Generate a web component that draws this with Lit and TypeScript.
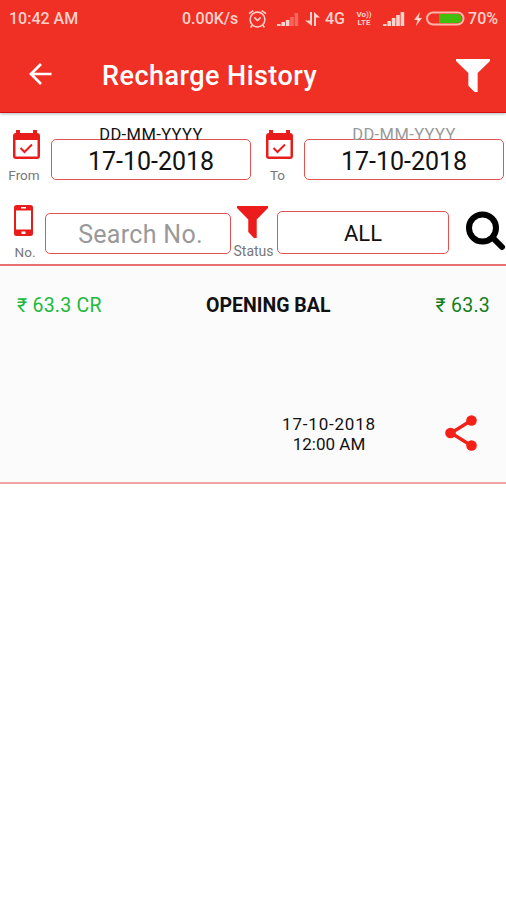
import { LitElement, html, css, svg } from "lit";
import { customElement } from "lit/decorators.js";

const calendar = html`<svg width="27" height="30" viewBox="0 0 27 30">
  <path fill="#e91c1c" fill-rule="evenodd" d="M3 1.500V0h4v3h13V0h4v3q3 0 3 3v20q0 3-3 3H3q-3 0-3-3V6q0-3 3-3zM2.500 10v16.500h22V10z"/>
  <path fill="none" stroke="#e91c1c" stroke-width="2" d="M7.500 18l4 4 7.500-7.500"/></svg>`;

const funnelPath = svg`<path d="M0 0h33v2L21 13.500v18.500h-3l-6-6V13.500L0 2z"/>`;

@customElement("app-root")
export class AppRoot extends LitElement {
  static styles = css`
    :host { display: block; width: 506px; height: 900px; overflow: hidden; background: #fff; font-family: Roboto, sans-serif; color: #111; }
    svg { display: block; flex: none; }
    header { height: 113px; background: #f02f25; border-bottom: 1px solid #dc0f0d; box-sizing: border-box; box-shadow: 0 1px 3px #a9bbbf; position: relative; color: #fff; }
    .status { height: 37px; display: flex; align-items: center; padding: 0 8px 0 9px; box-sizing: border-box; font-size: 16px; font-weight: 500; color: #ffd2cb; white-space: nowrap; }
    .status .time { width: 173px; }
    .status .rate { width: 66px; }
    .status .net { width: 30px; }
    .status .pct { margin-left: auto; }
    .volte { width: 18px; font-size: 8px; line-height: 7.500px; font-weight: 700; text-align: center; margin-right: 9px; }
    .bar { height: 76px; display: flex; align-items: center; padding: 0 16px 0 29px; }
    .back { margin-bottom: 2px; }
    h1 { margin: 2px 0 0 50px; flex: 1; font-size: 27px; font-weight: 500; line-height: 32px; letter-spacing: 0.460px; }
    .filters { height: 151px; box-sizing: border-box; padding-top: 8px; }
    .row { display: grid; }
    .dates { grid-template-columns: 51px 200px 53px 200px; height: 79px; }
    .search { grid-template-columns: 45px 186px 46px 172px 57px; height: 64px; }
    .cell { display: flex; flex-direction: column; align-items: center; color: #777; font-size: 13.500px; line-height: 16px; white-space: nowrap; }
    .from, .to { padding-top: 9px; gap: 7px; }
    .from { padding-left: 2px; }
    .from span { margin-right: 5px; }
    .to { padding-right: 0; padding-left: 0; }
    .to svg { margin-left: 4px; }
    .from { box-sizing: border-box; }
    .no { padding: 5px 0 0 2px; gap: 8px; }
    .no span { margin-left: 3px; }
    .state { padding-top: 6px; gap: 5px; font-size: 14px; }
    .state svg { margin-right: 4px; }
    .state span { margin-right: 1px; }
    .hint { height: 18px; line-height: 27px; font-size: 16.500px; letter-spacing: 0.400px; text-align: center; }
    .pale { color: #999; }
    .box { box-sizing: border-box; border: 1px solid #e45252; border-radius: 5px; height: 41px; padding-top: 3px; display: flex; align-items: center; justify-content: center; font-size: 25px; white-space: nowrap; }
    .number { margin-top: 13px; padding: 1px 0 0 5px; letter-spacing: 0.300px; }
    .kind { margin-top: 11px; height: 43px; font-size: 22px; padding-top: 2px; }
    .find { margin: 11px 0 0 17px; }
    .card { height: 220px; box-sizing: border-box; background: #fbfbfb; border-top: 2px solid #e87070; border-bottom: 2px solid #efa3a3; }
    .line { display: grid; grid-template-columns: 189px 1fr auto; padding: 28px 16px 0 17px; font-size: 19.500px; line-height: 24px; }
    .credit { color: #20b83a; letter-spacing: 0.250px; }
    .name { font-weight: 700; }
    .balance { color: #147d1c; letter-spacing: 0.250px; }
    .foot { display: flex; justify-content: flex-end; align-items: center; padding: 94px 29px 0 0; }
    .stamp { width: 100px; text-align: center; font-size: 17px; line-height: 20px; margin-right: 66px; padding-top: 2px; }
    .day { letter-spacing: 0.800px; }
  `;

  bars(heights: number[], faded: number) {
    return heights.map((h, i) => svg`<rect x=${i * 4.4} y=${14 - h} width="3.600" height=${h} opacity=${i >= faded ? 0.35 : 1} />`);
  }

  render() {
    return html`
      <header>
        <div class="status">
          <span class="time">10:42 AM</span><span class="rate">0.00K/s</span>
          <svg width="19" height="20" viewBox="0 0 18 18" fill="none" stroke="#ffd2cb" stroke-width="1.500"><circle cx="9" cy="9.500" r="7"/><path d="M6 7.500l3 3 3-3M1 4l4-3M17 4l-4-3M4 15l-1.500 2M14 15l1.500 2"/></svg>
          <svg width="38" height="14" viewBox="-10 0 38 14" fill="#ffd2cb">${this.bars([2, 4, 6, 9, 13], 3)}</svg>
          <svg width="20" height="14" viewBox="0 0 20 14" fill="#ffd2cb"><path d="M5 0h2v14L0 8.500h5zM9 14V0l6 5.500h-4V14z"/></svg>
          <span class="net">4G</span>
          <span class="volte">Vo))<br>LTE</span>
          <svg width="32" height="14" viewBox="-1 0 32 14" fill="#ffd2cb">${this.bars([2, 5, 8, 11, 14], 9)}</svg>
          <svg width="51" height="16" viewBox="0 0 51 16"><path fill="#ffd2cb" d="M6 1L0 9h3.500L2 15l6-8H4.500z"/><rect x="13" y="1.500" width="36.500" height="12" rx="6" fill="none" stroke="#ffb5aa" stroke-width="2"/><path fill="#43bd0b" d="M25 3h18q4.500 0 4.500 4.500t-4.500 4.500H25z"/></svg>
          <span class="pct">70%</span>
        </div>
        <div class="bar">
          <svg class="back" width="23" height="22" viewBox="0 0 23 22" fill="none" stroke="#fff" stroke-width="2.700"><path d="M22.500 11H2M12 1L2 11l10 10"/></svg>
          <h1>Recharge History</h1>
          <svg width="34" height="33" viewBox="0 0 33 32" fill="#fff">${funnelPath}</svg>
        </div>
      </header>
      <section class="filters">
        <div class="row dates">
          <div class="cell from">${calendar}<span>From</span></div>
          <div><div class="hint">DD-MM-YYYY</div><div class="box">17-10-2018</div></div>
          <div class="cell to">${calendar}<span>To</span></div>
          <div><div class="hint pale">DD-MM-YYYY</div><div class="box">17-10-2018</div></div>
        </div>
        <div class="row search">
          <div class="cell no"><svg width="19" height="31" viewBox="0 0 19 31"><path fill="#e91c1c" fill-rule="evenodd" d="M2.500 0h14Q19 0 19 2.500v26Q19 31 16.500 31h-14Q0 31 0 28.500v-26Q0 0 2.500 0zM2 5.500v19h15v-19zM7 2v1.500h5V2zM7.500 26.500v2.500h4v-2.500z"/></svg><span>No.</span></div>
          <div class="box number pale">Search No.</div>
          <div class="cell state"><svg width="31" height="32" viewBox="0 0 33 32" fill="#ed1c1c" preserveAspectRatio="none">${funnelPath}</svg><span>Status</span></div>
          <div class="box kind">ALL</div>
          <svg class="find" width="40" height="40" viewBox="0 0 40 40" fill="none" stroke="#000"><circle cx="16.500" cy="17" r="13.500" stroke-width="6"/><path d="M26.500 26.500L36 36" stroke-width="6" stroke-linecap="round"/></svg>
        </div>
      </section>
      <section class="card">
        <div class="line"><span class="credit">₹ 63.3 CR</span><span class="name">OPENING BAL</span><span class="balance">₹ 63.3</span></div>
        <div class="foot">
          <div class="stamp"><span class="day">17-10-2018</span><br>12:00 AM</div>
          <svg width="32" height="36" viewBox="0 0 32 36" fill="#f42018"><path d="M27 5L6 18l21 13" fill="none" stroke="#f42018" stroke-width="3.300"/><circle cx="26.500" cy="5.500" r="5.300"/><circle cx="5.500" cy="18" r="5.300"/><circle cx="26.500" cy="30.500" r="5.300"/></svg>
        </div>
      </section>`;
  }
}
